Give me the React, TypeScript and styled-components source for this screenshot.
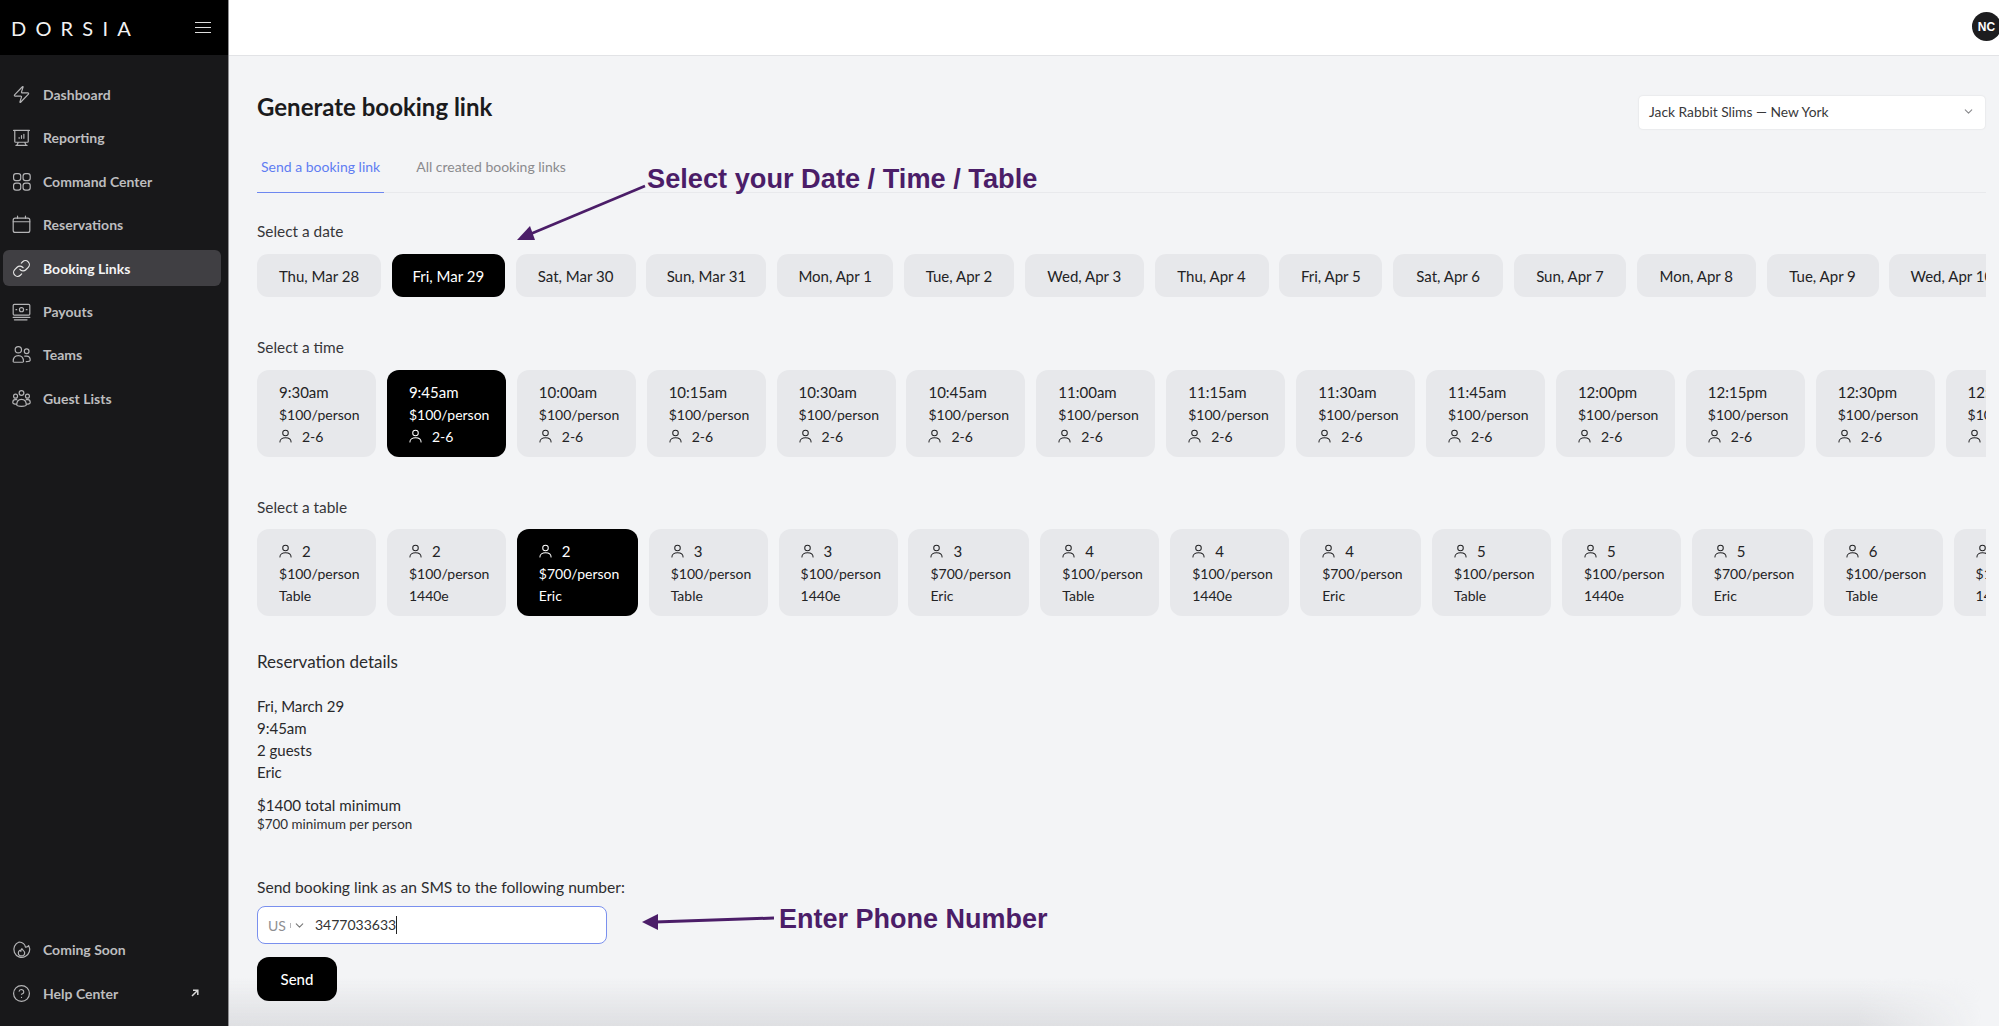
import React from "react";
import styled, { createGlobalStyle } from "styled-components";
import { ChevronDown, Link, Zap, CircleHelp } from "lucide-react";

const FONT = `"Lato", "Noto Sans", "Liberation Sans", sans-serif`;

const Global = createGlobalStyle`
  html, body { margin: 0; padding: 0; height: 100%; background: #f3f4f6; overflow: hidden; }
  * { box-sizing: border-box; }
  body { font-family: ${FONT}; color: #1c1c1e; }
`;

const Shell = styled.div`
  position: relative;
  display: flex;
  width: 1999px;
  height: 1026px;
  overflow: hidden;
`;

const Sidebar = styled.aside`
  flex: 0 0 229px;
  display: flex;
  flex-direction: column;
  background: #18181a;
  border-right: 1px solid #8f8f92;
`;

const Brand = styled.div`
  height: 55px;
  background: #000;
  display: flex;
  align-items: center;
  justify-content: space-between;
  padding: 0 17px 0 11px;
`;

const Logo = styled.span`
  color: #f2f2f2;
  font-size: 20px;
  font-weight: 400;
  letter-spacing: 9.2px;
  line-height: 1;
`;

const Burger = styled.span`
  display: flex;
  flex-direction: column;
  gap: 3.5px;
  width: 16px;
  & > i { display: block; height: 1.6px; background: #ddd; }
`;

const NavList = styled.nav`
  display: flex;
  flex-direction: column;
  padding: 21.5px 7px 0 3px;
  gap: 7.4px;
`;

const NavItem = styled.a<{ $active?: boolean }>`
  display: flex;
  align-items: center;
  gap: 12px;
  height: 36px;
  padding: 0 22px 0 9px;
  border-radius: 6px;
  font-size: 14px;
  font-weight: 700;
  color: ${(p) => (p.$active ? "#f4f4f4" : "#bdbdbf")};
  background: ${(p) => (p.$active ? "#403f43" : "transparent")};
  & > svg { flex: 0 0 19px; width: 19px; height: 19px; color: ${(p) => (p.$active ? "#e6e6e6" : "#b4b4b6")}; }
`;

const NavSpacer = styled.div`
  flex: 1;
`;

const NavFoot = styled(NavList)`
  padding-top: 0;
  padding-bottom: 15px;
`;

const Ext = styled.svg`
  && {
    flex: none;
    width: 8px;
    height: 8px;
    margin-left: auto;
  }
`;

const Main = styled.main`
  position: relative;
  flex: 1;
  min-width: 0;
  display: flex;
  flex-direction: column;
`;

const TopBar = styled.header`
  height: 56px;
  flex: none;
  background: #fff;
  border-bottom: 1px solid #e2e3e6;
  display: flex;
  align-items: flex-start;
  justify-content: flex-end;
  padding: 12px 0 0;
`;

const Avatar = styled.div`
  width: 29px;
  height: 29px;
  border-radius: 50%;
  background: #1d1d1f;
  color: #fff;
  font: 700 12px "Liberation Sans", sans-serif;
  display: flex;
  align-items: center;
  justify-content: center;
  margin-right: -2px;
`;

const Content = styled.div`
  position: relative;
  z-index: 1;
  padding: 37px 13px 0 28px;
  flex: 1;
  min-width: 0;
`;

const HeadRow = styled.div`
  display: flex;
  justify-content: space-between;
  align-items: flex-start;
  height: 36px;
`;

const Title = styled.h1`
  margin: 0;
  font-size: 24px;
  line-height: 28px;
  font-weight: 700;
  color: #1b1b1d;
`;

const VenueSelect = styled.div`
  width: 346px;
  height: 33px;
  margin-top: 3px;
  margin-right: 1px;
  padding: 0 10px 2px;
  background: #fff;
  border-radius: 4px;
  box-shadow: 0 0 2px rgba(0, 0, 0, 0.12);
  display: flex;
  align-items: center;
  justify-content: space-between;
  font-size: 13.8px;
  color: #38383a;
  & > svg { width: 13px; height: 13px; color: #8a8a8d; }
`;

const Tabs = styled.div`
  display: flex;
  margin-top: 28px;
  gap: 28px;
  border-bottom: 1px solid #e8e9ec;
`;

const Tab = styled.a<{ $active?: boolean }>`
  font-size: 14px;
  line-height: 20px;
  padding: 0 4px 15px;
  margin-bottom: -1px;
  color: ${(p) => (p.$active ? "#5f7df2" : "#8b8b8e")};
  border-bottom: 1px solid ${(p) => (p.$active ? "#6d87f0" : "transparent")};
`;

const Label = styled.div<{ $top: number; $bottom: number }>`
  margin-top: ${(p) => p.$top}px;
  margin-bottom: ${(p) => p.$bottom}px;
  font-size: 15.4px;
  line-height: 20px;
  color: #37373a;
`;

const Row = styled.div<{ $gap: number }>`
  display: flex;
  gap: ${(p) => p.$gap}px;
  overflow: hidden;
`;

const DateChip = styled.div<{ $active?: boolean; $w: number }>`
  flex: none;
  width: ${(p) => p.$w}px;
  height: 43px;
  border-radius: 11px;
  display: flex;
  align-items: center;
  justify-content: center;
  font-size: 15px;
  white-space: nowrap;
  background: ${(p) => (p.$active ? "#000" : "#e7e8eb")};
  color: ${(p) => (p.$active ? "#fff" : "#232325")};
`;

const SlotChip = styled.div<{ $active?: boolean; $w: number }>`
  flex: none;
  width: ${(p) => p.$w}px;
  height: 87px;
  border-radius: 12px;
  padding: 11px 0 0 22px;
  background: ${(p) => (p.$active ? "#000" : "#e7e8eb")};
  color: ${(p) => (p.$active ? "#fff" : "#232325")};
  white-space: nowrap;
  overflow: hidden;
`;

const SlotLine = styled.div<{ $big?: boolean }>`
  display: flex;
  align-items: center;
  gap: 10px;
  height: 22px;
  font-size: ${(p) => (p.$big ? 15 : 14)}px;
  & > svg { flex: none; width: 13px; height: 14px; }
`;

const DetailsTitle = styled.div`
  margin-top: 36px;
  font-size: 17px;
  line-height: 20px;
  color: #2b2b2d;
`;

const DetailLines = styled.div`
  margin-top: 23px;
  font-size: 15px;
  line-height: 22px;
  color: #29292b;
`;

const Total = styled.div`
  margin-top: 11px;
  font-size: 15.2px;
  line-height: 22px;
  color: #29292b;
`;

const PerPerson = styled.div`
  font-size: 13.4px;
  line-height: 16px;
  color: #2e2e30;
`;

const SmsLabel = styled.div`
  margin-top: 45px;
  font-size: 15.6px;
  line-height: 20px;
  color: #2e2e30;
`;

const PhoneField = styled.div`
  margin-top: 9px;
  width: 350px;
  height: 38px;
  display: flex;
  align-items: center;
  background: #fff;
  border: 1px solid #7a90ee;
  border-radius: 8px;
  padding-left: 10px;
  font-size: 14px;
`;

const Country = styled.span`
  display: flex;
  align-items: center;
  width: 47px;
  color: #8e8e92;
  & > svg { width: 13px; height: 13px; margin-left: 2px; color: #777; }
`;

const CountryTick = styled.i`
  width: 1px;
  height: 5px;
  margin-left: 4px;
  background: #b5b5b8;
`;

const PhoneNumber = styled.span`
  color: #333;
  border-right: 1px solid #222;
  line-height: 18px;
`;

const SendButton = styled.button`
  display: block;
  margin-top: 13px;
  width: 80px;
  height: 44px;
  border: 0;
  border-radius: 12px;
  background: #000;
  color: #fff;
  font: 500 15px ${FONT};
`;

const BottomFade = styled.div`
  position: absolute;
  z-index: 0;
  left: 0;
  right: 0;
  bottom: 0;
  height: 48px;
  pointer-events: none;
  background: linear-gradient(to bottom, rgba(222, 223, 226, 0), rgba(222, 223, 226, 1));
  mask-image: linear-gradient(to right, #000 92%, transparent 99%);
`;

const Note = styled.div<{ $x: number; $y: number; $size: number }>`
  position: absolute;
  z-index: 2;
  left: ${(p) => p.$x}px;
  top: ${(p) => p.$y}px;
  font: 700 ${(p) => p.$size}px/1.2 "Liberation Sans", Arial, sans-serif;
  color: #4b1d68;
  white-space: nowrap;
`;

const NoteArrow = styled.svg`
  position: absolute;
  z-index: 2;
  left: 0;
  top: 0;
  width: 1999px;
  height: 1026px;
  pointer-events: none;
`;

const stroke = { fill: "none", stroke: "currentColor", strokeWidth: 1.5, strokeLinecap: "round", strokeLinejoin: "round" } as const;

const IconBase = ({ children, vb = "0 0 24 24" }: { children: React.ReactNode; vb?: string }) => (
  <svg viewBox={vb} {...stroke}>{children}</svg>
);

const ReportIcon = () => (
  <IconBase>
    <path d="M2 3h20M3.500 3v14a1 1 0 0 0 1 1h15a1 1 0 0 0 1-1V3M8 18l-2 4M16 18l2 4M5 22h14" />
    <path d="M9 13v-1M12 13V9.500M15 13V8" />
  </IconBase>
);
const GridIcon = () => (
  <IconBase>
    <rect x="2" y="2" width="9" height="9" rx="3" />
    <rect x="14" y="2" width="9" height="9" rx="3" />
    <rect x="2" y="14" width="9" height="9" rx="3" />
    <rect x="14" y="14" width="9" height="9" rx="3" />
  </IconBase>
);
const CalIcon = () => (
  <IconBase>
    <rect x="1.500" y="4" width="21" height="18" rx="2.500" />
    <path d="M1.500 8.500h21M7 1.500V4M17 1.500V4" />
  </IconBase>
);
const PayIcon = () => (
  <IconBase>
    <rect x="1.500" y="3" width="21" height="13.500" rx="1.500" />
    <circle cx="12" cy="9.700" r="2.600" />
    <path d="M5 9.700h1M18 9.700h1M1.500 19.500h21M3 22.500h16" />
  </IconBase>
);
const TeamIcon = () => (
  <IconBase>
    <circle cx="8" cy="6" r="4" />
    <circle cx="18.500" cy="8" r="3" />
    <path d="M1.500 21c0-5 3-7.500 6.500-7.500s6.500 2.500 6.500 7.500c0 1-13 1-13 0zM16 14h2.500c3 0 4.500 2 4.500 5 0 1.500-2 2-5 2" />
  </IconBase>
);
const GuestIcon = () => (
  <IconBase>
    <circle cx="12" cy="5" r="3" />
    <circle cx="4.500" cy="9" r="2.500" />
    <circle cx="19.500" cy="9" r="2.500" />
    <path d="M6 20c0-5 2.500-7 6-7s6 2 6 7c0 2.500-12 2.500-12 0zM6 13.500H4C2 13.500 1 15 1 17c0 1.500 2 2.200 5 2.200M18 13.500h2c2 0 3 1.500 3 3.500 0 1.500-2 2.200-5 2.200" />
  </IconBase>
);
const FlameIcon = () => (
  <IconBase>
    <path d="M9 2.500A10 10 0 1 0 21 7c-1 1.500-2.500 2.200-4 2-.5-3-3.500-6-8-6.500z" />
    <path d="M12.500 11c.5 2 3.500 2.500 3.500 5a4 4 0 0 1-8 0c0-1.500 1-2.500 2-3 .2 1 .8 1.300 1.300 1.200-.3-1.200.2-2.400 1.200-3.200z" />
  </IconBase>
);
const PersonIcon = () => (
  <svg viewBox="0 0 14 15" fill="none" stroke="currentColor" strokeWidth="1.1" strokeLinecap="round">
    <circle cx="7" cy="4.200" r="3" />
    <path d="M1 14c0-3 2.600-4.600 6-4.600s6 1.600 6 4.600" />
  </svg>
);

const navTop: { label: string; icon: React.ReactNode; active?: boolean }[] = [
  { label: "Dashboard", icon: <Zap strokeWidth={1.5} /> },
  { label: "Reporting", icon: <ReportIcon /> },
  { label: "Command Center", icon: <GridIcon /> },
  { label: "Reservations", icon: <CalIcon /> },
  { label: "Booking Links", icon: <Link strokeWidth={1.5} />, active: true },
  { label: "Payouts", icon: <PayIcon /> },
  { label: "Teams", icon: <TeamIcon /> },
  { label: "Guest Lists", icon: <GuestIcon /> },
];

const dates: [string, number][] = [
  ["Thu, Mar 28", 124], ["Fri, Mar 29", 113], ["Sat, Mar 30", 120], ["Sun, Mar 31", 120],
  ["Mon, Apr 1", 116], ["Tue, Apr 2", 110], ["Wed, Apr 3", 119], ["Thu, Apr 4", 114],
  ["Fri, Apr 5", 103], ["Sat, Apr 6", 110], ["Sun, Apr 7", 112], ["Mon, Apr 8", 119],
  ["Tue, Apr 9", 112], ["Wed, Apr 10", 125],
];

const times = ["9:30am", "9:45am", "10:00am", "10:15am", "10:30am", "10:45am", "11:00am", "11:15am", "11:30am", "11:45am", "12:00pm", "12:15pm", "12:30pm", "12:45pm"];

const tables: { n: number; price: number; name: string }[] = [2, 3, 4, 5, 6, 7].flatMap((n) => [
  { n, price: 100, name: "Table" },
  { n, price: 100, name: "1440e" },
  { n, price: 700, name: "Eric" },
]).slice(0, 14);

export default function App() {
  return (
    <>
      <Global />
      <Shell>
        <Sidebar>
          <Brand>
            <Logo>DORSIA</Logo>
            <Burger><i /><i /><i /></Burger>
          </Brand>
          <NavList>
            {navTop.map((n) => (
              <NavItem key={n.label} $active={n.active}>{n.icon}{n.label}</NavItem>
            ))}
          </NavList>
          <NavSpacer />
          <NavFoot>
            <NavItem><FlameIcon />Coming Soon</NavItem>
            <NavItem>
              <CircleHelp strokeWidth={1.5} />Help Center
              <Ext viewBox="0 0 8 8" fill="none" stroke="#d8d8d8" strokeWidth="1.5"><path d="M1 7l5.500-5.500M2 1.200h4.800V6" /></Ext>
            </NavItem>
          </NavFoot>
        </Sidebar>
        <Main>
          <TopBar><Avatar>NC</Avatar></TopBar>
          <BottomFade />
          <Content>
            <HeadRow>
              <Title>Generate booking link</Title>
              <VenueSelect>Jack Rabbit Slims — New York<ChevronDown /></VenueSelect>
            </HeadRow>
            <Tabs>
              <Tab $active>Send a booking link</Tab>
              <Tab>All created booking links</Tab>
            </Tabs>

            <Label $top={28} $bottom={13}>Select a date</Label>
            <Row $gap={10.8}>
              {dates.map(([d, w]) => (
                <DateChip key={d} $active={d === "Fri, Mar 29"} $w={w}>{d}</DateChip>
              ))}
            </Row>

            <Label $top={40} $bottom={13}>Select a time</Label>
            <Row $gap={10.9}>
              {times.map((t) => (
                <SlotChip key={t} $active={t === "9:45am"} $w={119}>
                  <SlotLine $big>{t}</SlotLine>
                  <SlotLine>$100/person</SlotLine>
                  <SlotLine><PersonIcon />2-6</SlotLine>
                </SlotChip>
              ))}
            </Row>

            <Label $top={40} $bottom={12}>Select a table</Label>
            <Row $gap={10.9}>
              {tables.map((t, i) => (
                <SlotChip key={i} $active={i === 2} $w={t.price === 700 ? 121 : 119}>
                  <SlotLine $big><PersonIcon />{t.n}</SlotLine>
                  <SlotLine>${t.price}/person</SlotLine>
                  <SlotLine>{t.name}</SlotLine>
                </SlotChip>
              ))}
            </Row>

            <DetailsTitle>Reservation details</DetailsTitle>
            <DetailLines>
              <div>Fri, March 29</div>
              <div>9:45am</div>
              <div>2 guests</div>
              <div>Eric</div>
            </DetailLines>
            <Total>$1400 total minimum</Total>
            <PerPerson>$700 minimum per person</PerPerson>

            <SmsLabel>Send booking link as an SMS to the following number:</SmsLabel>
            <PhoneField>
              <Country>US<CountryTick /><ChevronDown /></Country>
              <PhoneNumber>3477033633</PhoneNumber>
            </PhoneField>
            <SendButton>Send</SendButton>
          </Content>
        </Main>

        <Note $x={647} $y={163} $size={27.2}>Select your Date / Time / Table</Note>
        <Note $x={779} $y={903} $size={27}>Enter Phone Number</Note>
        <NoteArrow viewBox="0 0 1999 1026">
          <path d="M645 186L528 235" stroke="#4b1d68" strokeWidth="2.6" fill="none" />
          <path d="M517 240L530 226L535 240Z" fill="#4b1d68" />
          <path d="M774 918L655 922" stroke="#4b1d68" strokeWidth="3" fill="none" />
          <path d="M642 922L658 914L658 930Z" fill="#4b1d68" />
        </NoteArrow>
      </Shell>
    </>
  );
}
